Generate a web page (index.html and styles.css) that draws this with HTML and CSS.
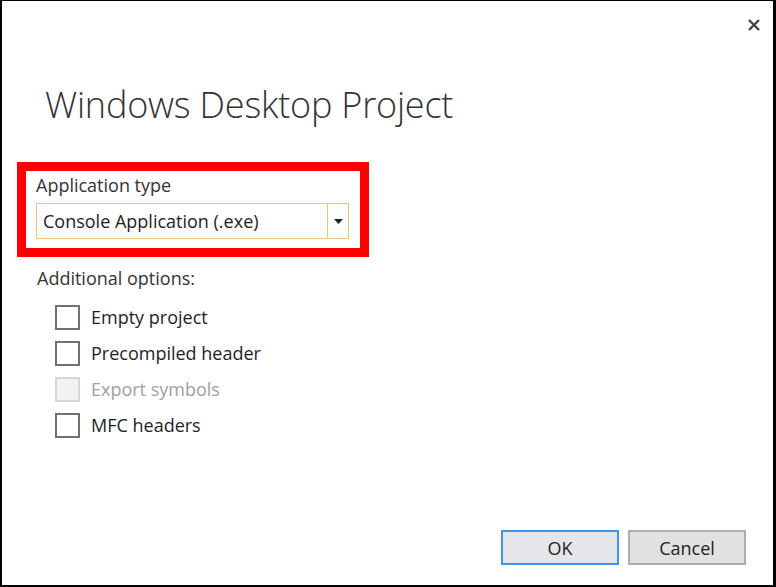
FILE: index.html
```html
<!DOCTYPE html>
<html>
<head>
<meta charset="utf-8">
<link rel="stylesheet" href="styles.css">
</head>
<body>
<div class="dialog">
  <div class="titlebar">
    <button class="close" aria-label="Close">
      <svg width="14" height="14" viewBox="0 0 14 14"><path d="M2 2 L12 12 M12 2 L2 12" stroke="#444" stroke-width="2.4" fill="none"/></svg>
    </button>
  </div>
  <h1 class="title">Windows Desktop Project</h1>
  <div class="highlight">
    <div class="field-label">Application type</div>
    <div class="combo">
      <span class="combo-value">Console Application (.exe)</span>
      <span class="combo-btn"><svg width="9" height="5" viewBox="0 0 9 5"><path d="M0 0 H9 L4.5 5 Z" fill="#222"/></svg></span>
    </div>
  </div>
  <div class="options-label">Additional options:</div>
  <ul class="options">
    <li class="option"><span class="check"></span><span>Empty project</span></li>
    <li class="option"><span class="check"></span><span>Precompiled header</span></li>
    <li class="option disabled"><span class="check"></span><span>Export symbols</span></li>
    <li class="option"><span class="check"></span><span>MFC headers</span></li>
  </ul>
  <div class="footer">
    <button class="btn btn-default">OK</button>
    <button class="btn">Cancel</button>
  </div>
</div>
</body>
</html>
```

FILE: styles.css
```css
html, body {
  margin: 0;
  padding: 0;
  width: 776px;
  height: 587px;
  background: #fff;
}

.dialog {
  box-sizing: border-box;
  width: 776px;
  height: 587px;
  border-style: solid;
  border-color: #000;
  border-width: 1px 3px 2px 2px;
  display: flex;
  flex-direction: column;
  font-family: "Open Sans", "Noto Sans", sans-serif;
  color: #1e1e1e;
  padding-left: 15px;
}

.titlebar {
  display: flex;
  justify-content: flex-end;
  padding: 17px 12px 0 0;
  height: 16px;
}

.close {
  border: 0;
  background: transparent;
  padding: 0;
  width: 14px;
  height: 14px;
  display: flex;
}

.title {
  margin: 51px 0 0 28px;
  font-weight: 300;
  font-size: 36px;
  line-height: 40px;
  color: #333;
  letter-spacing: -0.2px;
}

.highlight {
  margin-top: 37px;
  width: 324px;
  height: 77px;
  border: 9px solid #ff0000;
  padding: 0 0 0 10px;
}

.field-label {
  font-size: 18px;
  line-height: 24px;
  margin-top: 2px;
  color: #333;
}

.combo {
  margin-top: 6px;
  width: 311px;
  height: 34px;
  border: 1px solid #e6c77c;
  display: flex;
  align-items: stretch;
}

.combo-value {
  flex: 1;
  font-size: 18px;
  line-height: 34px;
  padding-left: 6px;
  color: #1e1e1e;
}

.combo-btn {
  width: 20px;
  border-left: 1px solid #e6c77c;
  display: flex;
  align-items: center;
  justify-content: center;
}

.options-label {
  margin: 9px 0 0 20px;
  font-size: 18px;
  line-height: 24px;
  color: #333;
}

.options {
  list-style: none;
  margin: 15px 0 0 38px;
  padding: 0;
  display: flex;
  flex-direction: column;
  gap: 12px;
}

.option {
  display: flex;
  align-items: center;
  gap: 11px;
  font-size: 18px;
  height: 24px;
  color: #1e1e1e;
}

.check {
  box-sizing: border-box;
  width: 25px;
  height: 25px;
  border: 2px solid #707070;
  background: #fff;
}

.option.disabled {
  color: #a0a0a0;
}

.option.disabled .check {
  border-color: #d6d6d6;
  background: #f2f2f2;
}

.footer {
  margin-top: auto;
  display: flex;
  justify-content: flex-end;
  gap: 9px;
  padding: 0 27px 20px 0;
}

.btn {
  box-sizing: border-box;
  width: 118px;
  height: 35px;
  font-family: "Open Sans", "Noto Sans", sans-serif;
  font-size: 18px;
  color: #1e1e1e;
  background: #e1e1e1;
  border: 2px solid #adadad;
  padding: 0;
}

.btn-default {
  background: #e5e5ea;
  border-color: #3c96f0;
}
```
